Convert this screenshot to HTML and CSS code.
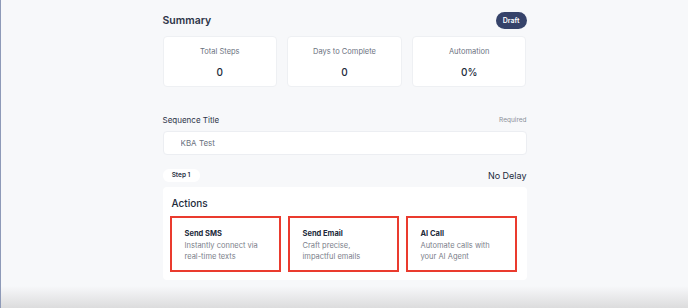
FILE: index.html
```html
<!DOCTYPE html>
<html lang="en">
  <head>
    <meta charset="UTF-8" />
    <meta name="viewport" content="width=device-width, initial-scale=1.0" />
    <title>Sequence Builder</title>
    <link rel="stylesheet" href="styles.css">
  </head>
  <body>
    <div class="container">
      <div class="summary-header">
        <h2>Summary</h2>
        <span class="badge">Draft</span>
      </div>

      <div class="stats">
        <div class="stat-card">
          <div class="stat-label">Total Steps</div>
          <div class="stat-value">0</div>
        </div>
        <div class="stat-card">
          <div class="stat-label">Days to Complete</div>
          <div class="stat-value">0</div>
        </div>
        <div class="stat-card">
          <div class="stat-label">Automation</div>
          <div class="stat-value">0%</div>
        </div>
      </div>

      <div class="field-header">
        <label for="seq_title">Sequence Title</label>
        <span class="required">Required</span>
      </div>
      <input type="text" id="seq_title" value="KBA Test" />

      <div class="step-row">
        <span class="step-pill">Step 1</span>
        <span class="delay">No Delay</span>
      </div>

      <div class="actions-card">
        <h3>Actions</h3>
        <div class="actions-grid">
          <div class="action">
            <div class="action-title">Send SMS</div>
            <div class="action-desc">Instantly connect via real-time texts</div>
          </div>
          <div class="action">
            <div class="action-title">Send Email</div>
            <div class="action-desc">Craft precise, impactful emails</div>
          </div>
          <div class="action">
            <div class="action-title">AI Call</div>
            <div class="action-desc">Automate calls with your AI Agent</div>
          </div>
        </div>
      </div>
    </div>
  </body>
</html>
```

FILE: styles.css
```css
html,
body {
  margin: 0;
  height: 100%;
}

body {
  font-family: Inter, "Noto Sans", sans-serif;
  color: #2a3245;
  background: linear-gradient(to bottom, #f7f8fa calc(100% - 22px), #dcdcdd);
  border-left: 1px solid #8e9ab8;
  box-sizing: border-box;
  overflow: hidden;
}

.container {
  max-width: 364px;
  margin: 0 auto;
  padding-top: 11px;
}

.summary-header {
  display: flex;
  justify-content: space-between;
  align-items: center;
  height: 18px;
}

.summary-header h2 {
  margin: 0;
  font-size: 10.5px;
  font-weight: 600;
  color: #2d3548;
}

.badge {
  background-color: #36436a; /* navy pill */
  color: #fff;
  font-size: 7px;
  font-weight: 600;
  padding: 0 7px;
  height: 17px;
  line-height: 17px;
  border-radius: 9px;
}

.stats {
  display: grid;
  grid-template-columns: repeat(3, 1fr);
  gap: 10px;
  margin-top: 7px;
}

.stat-card {
  background: #fff;
  border: 1px solid #eef0f3;
  border-radius: 4px;
  height: 51px;
  box-sizing: border-box;
  text-align: center;
  padding-top: 9px;
}

.stat-label {
  font-size: 7.5px;
  color: #6b7280;
  line-height: 11px;
}

.stat-value {
  font-size: 10px;
  font-weight: 500;
  color: #222a3a;
  margin-top: 9px;
  line-height: 12px;
}

.field-header {
  display: flex;
  justify-content: space-between;
  align-items: center;
  margin-top: 28px;
}

.field-header label {
  font-size: 8px;
  color: #2d3548;
}

.required {
  font-size: 6.5px;
  color: #8a8f99;
}

input[type="text"] {
  display: block;
  width: 100%;
  height: 24px;
  margin-top: 6px;
  padding: 0 17px;
  box-sizing: border-box;
  border: 1px solid #eceef2;
  border-radius: 4px;
  background: #fff;
  font-family: inherit;
  font-size: 8px;
  color: #6b7280;
  outline: none;
}

.step-row {
  display: flex;
  justify-content: space-between;
  align-items: center;
  margin-top: 14px;
}

.step-pill {
  background: #fff;
  font-size: 6.5px;
  font-weight: 600;
  color: #2a3245;
  width: 37px;
  height: 13px;
  line-height: 13px;
  border-radius: 6px;
  text-align: center;
}

.delay {
  font-size: 9px;
  color: #222a3a;
}

.actions-card {
  background: #fff;
  border-radius: 4px;
  margin-top: 5px;
  padding: 10px 10px 8px 7px;
}

.actions-card h3 {
  margin: 0 0 0 2px;
  font-size: 10px;
  font-weight: 500;
  line-height: 13px;
  color: #222a3a;
}

.actions-grid {
  display: grid;
  grid-template-columns: repeat(3, 1fr);
  gap: 7px;
  margin-top: 6px;
}

.action {
  border: 2px solid #ea3b2e; /* red highlight */
  height: 56px;
  box-sizing: border-box;
  padding: 10px 14px 0 13px;
}

.action-title {
  font-size: 7.5px;
  font-weight: 700;
  color: #222a3a;
  line-height: 11px;
}

.action-desc {
  font-size: 7.5px;
  color: #7b808a;
  line-height: 11px;
  margin-top: 1px;
}
```
